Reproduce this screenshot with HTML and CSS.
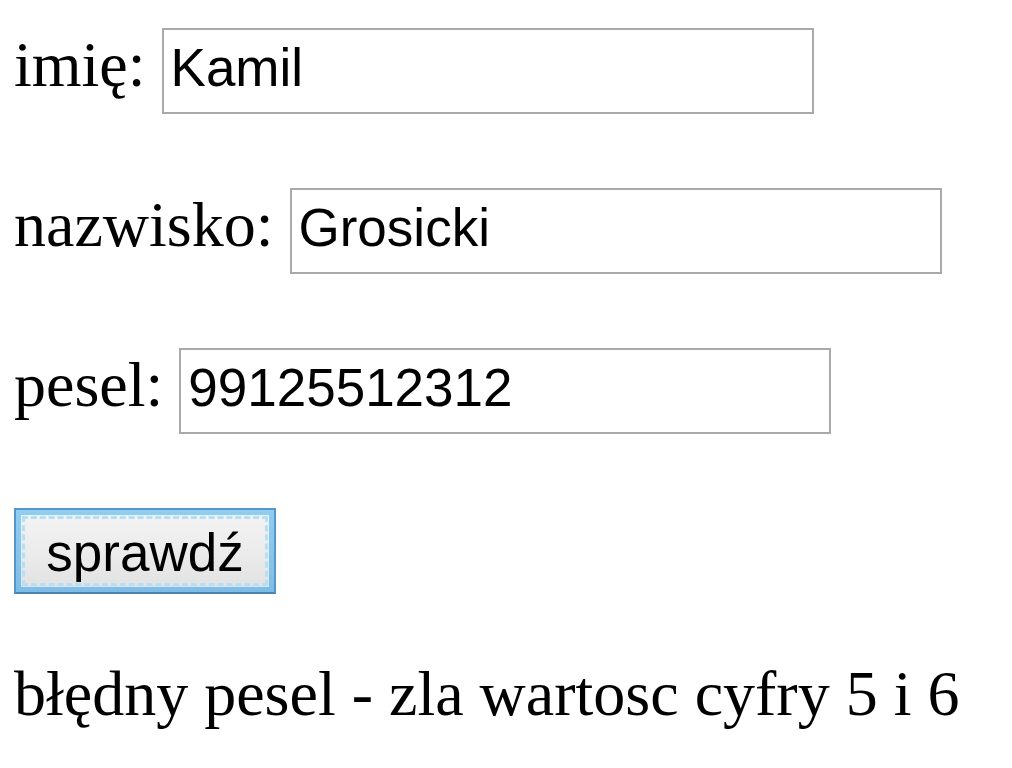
FILE: index.html
```html
<!doctype html>
<html lang="pl">
  <head>
    <meta charset="UTF-8" />
    <title>PESEL</title>
    <link rel="stylesheet" href="styles.css">
  </head>
  <body>
    <form class="form">
      <div class="row">
        <label for="imie">imię:</label>
        <input id="imie" type="text" value="Kamil" />
      </div>
      <div class="row">
        <label for="nazwisko">nazwisko:</label>
        <input id="nazwisko" type="text" value="Grosicki" />
      </div>
      <div class="row">
        <label for="pesel">pesel:</label>
        <input id="pesel" type="text" value="99125512312" />
      </div>
      <div class="row">
        <button type="button" class="btn"><span class="btn-face">sprawdź</span></button>
      </div>
    </form>
    <p class="result">błędny pesel - zla wartosc cyfry 5 i 6</p>
  </body>
</html>
```

FILE: styles.css
```css
* {
  box-sizing: border-box;
}

body {
  margin: 0;
  padding: 28px 14px 0;
  background: #fff;
  color: #000;
  font-family: "Liberation Serif", "Times New Roman", serif;
  font-size: 64px;
}

.form {
  display: flex;
  flex-direction: column;
  gap: 74px;
}

.row {
  display: flex;
  align-items: baseline;
  gap: 16px;
  height: 86px;
}

label {
  line-height: 1;
}

input {
  width: 652px;
  height: 86px;
  padding: 0 7px 8px;
  border: 2px solid #a9a9a9;
  background: #fff;
  font-family: "Liberation Sans", Arial, sans-serif;
  font-size: 53px;
  color: #000;
  outline: none;
}

.btn {
  position: relative;
  width: 262px;
  height: 86px;
  padding: 5px;
  border: 2px solid #5896c8;
  border-bottom-color: #4a82b0;
  background: linear-gradient(#8fcdf2, #7cbde8);
  font-family: "Liberation Sans", Arial, sans-serif;
  font-size: 53px;
  color: #000;
  cursor: pointer;
}

.btn-face {
  display: flex;
  align-items: center;
  justify-content: center;
  height: 100%;
  padding-top: 2px;
  background: linear-gradient(#f3f3f3 0%, #ececec 50%, #e2e2e2 100%);
  outline: 3px dashed #b3dff8;
  outline-offset: -4px;
  line-height: 1;
}

.result {
  margin: 63px 0 0;
  line-height: 74px;
}
```
